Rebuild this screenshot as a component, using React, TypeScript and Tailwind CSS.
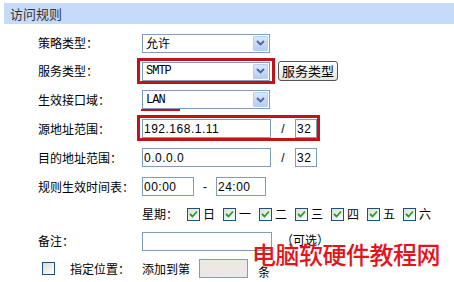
import React from "react";

const CJK = '"Noto Sans CJK SC", "Noto Sans", sans-serif';

function Arrow() {
  return (
    <div className="absolute right-[1px] top-[1px] bottom-[1px] w-[15px] rounded-[1px] border border-[#b9cdf3] bg-gradient-to-b from-[#dce7fc] to-[#b5cbf6] flex items-center justify-center">
      <svg width="9" height="6" viewBox="0 0 9 6">
        <path d="M1 1 L4.5 4.5 L8 1" fill="none" stroke="#4a6797" strokeWidth="1.8" />
      </svg>
    </div>
  );
}

function Select({ children, mono }: { children: React.ReactNode; mono?: boolean }) {
  return (
    <div className="relative w-[128px] h-[19px] border border-[#7f9db9] bg-white flex items-center pl-[3px]">
      <span
        className={mono ? "text-[12px] tracking-[-1px] text-black" : "text-[12px] text-black"}
        style={{ fontFamily: mono ? '"Liberation Mono", monospace' : CJK }}
      >
        {children}
      </span>
      <Arrow />
    </div>
  );
}

function Input({ w, value, bg }: { w: string; value?: string; bg?: string }) {
  return (
    <div
      className={`${w} h-[19px] border border-[#7f9db9] ${bg ?? "bg-white"} flex items-center pl-[1px] text-[12px] tracking-[0.5px] text-black`}
      style={{ fontFamily: '"Liberation Sans", sans-serif' }}
    >
      {value}
    </div>
  );
}

function Check({ checked }: { checked?: boolean }) {
  return (
    <div className="w-[13px] h-[13px] border border-[#1c5180] bg-gradient-to-br from-[#dcdcd7] to-[#ffffff] flex items-center justify-center">
      {checked && (
        <svg width="9" height="8" viewBox="0 0 9 8">
          <path d="M1 4 L3.5 6.5 L8 1.5" fill="none" stroke="#21a121" strokeWidth="1.8" />
        </svg>
      )}
    </div>
  );
}

function Row({ h, label, children, className }: { h: string; label?: string; children?: React.ReactNode; className?: string }) {
  return (
    <div className={`relative flex items-center ${h} ${className ?? ""}`}>
      <div className="w-[104px] shrink-0 text-[12px] text-black">{label}</div>
      {children}
    </div>
  );
}

export default function App() {
  const days = ["日", "一", "二", "三", "四", "五", "六"];
  return (
    <div className="relative w-[454px] h-[282px] bg-white overflow-hidden text-black" style={{ fontFamily: CJK }}>
      <div className="mt-[3px] ml-[4px] h-[21px] bg-[#c6dafa] flex items-center pl-[6px] text-[13px] text-[#333]">
        访问规则
      </div>
      <div className="pl-[38px] pt-[5px]">
        <Row h="h-[28px]" label="策略类型：">
          <Select>允许</Select>
        </Row>
        <Row h="h-[28px]" label="服务类型：">
          <div className="relative">
            <Select mono>SMTP</Select>
            <div className="absolute left-[-5px] top-[-4px] right-[-5px] bottom-[-3px] border-[3px] border-[#c4121b]" />
          </div>
          <div className="ml-[8px] h-[20px] px-[3px] rounded-[3px] border border-[#555] bg-gradient-to-b from-white to-[#e6e6e0] flex items-center text-[13px] text-black">
            服务类型
          </div>
        </Row>
        <Row h="h-[29px]" label="生效接口域：">
          <div className="relative">
            <Select mono>LAN</Select>
            <div className="absolute left-[-1px] bottom-[-2px] w-[39px] h-[2px] bg-[#c4121b]" />
          </div>
        </Row>
        <Row h="h-[29px]" label="源地址范围：">
          <div className="relative flex items-center">
            <Input w="w-[129px]" value="192.168.1.11" />
            <span className="w-[24px] text-center text-[12px]" style={{ fontFamily: '"Liberation Sans", sans-serif' }}>/</span>
            <Input w="w-[22px]" value="32" />
            <div className="absolute left-[-5px] top-[-4px] right-[-3px] bottom-[-3px] border-[3px] border-[#c4121b]" />
          </div>
        </Row>
        <Row h="h-[29px]" label="目的地址范围：">
          <Input w="w-[129px]" value="0.0.0.0" />
          <span className="w-[24px] text-center text-[12px]" style={{ fontFamily: '"Liberation Sans", sans-serif' }}>/</span>
          <Input w="w-[22px]" value="32" />
        </Row>
        <Row h="h-[29px]" label="规则生效时间表：">
          <Input w="w-[52px]" value="00:00" />
          <span className="w-[22px] text-center text-[12px]" style={{ fontFamily: '"Liberation Sans", sans-serif' }}>-</span>
          <Input w="w-[50px]" value="24:00" />
        </Row>
        <Row h="h-[26px]">
          <span className="text-[12px] mr-[9px]">星期：</span>
          <div className="flex items-center gap-[8px]">
            {days.map((d) => (
              <div key={d} className="flex items-center gap-[3px]">
                <Check checked />
                <span className="text-[12px] w-[12px]">{d}</span>
              </div>
            ))}
          </div>
        </Row>
        <Row h="h-[28px]" label="备注：">
          <Input w="w-[130px]" />
          <span className="ml-[9px] mb-[3px] text-[12px]">（可选）</span>
        </Row>
        <div className="flex items-center h-[27px] ml-[4px]">
          <div className="w-[28px] flex justify-start">
            <div className="w-[13px] h-[13px] border border-[#1c5180] bg-gradient-to-br from-[#dcdcd7] to-white" />
          </div>
          <span className="w-[72px] text-[12px]">指定位置：</span>
          <span className="text-[12px] w-[57px]">添加到第</span>
          <Input w="w-[49px]" bg="bg-[#ece9e4]" />
          <span className="ml-[10px] mt-[6px] text-[12px]">条</span>
        </div>
      </div>
      <div className="absolute left-[252px] top-[237px] text-[24px] leading-[34px] font-medium text-[#e3141c] tracking-[-0.5px]" style={{ fontFamily: CJK }}>
        电脑软硬件教程网
      </div>
    </div>
  );
}
